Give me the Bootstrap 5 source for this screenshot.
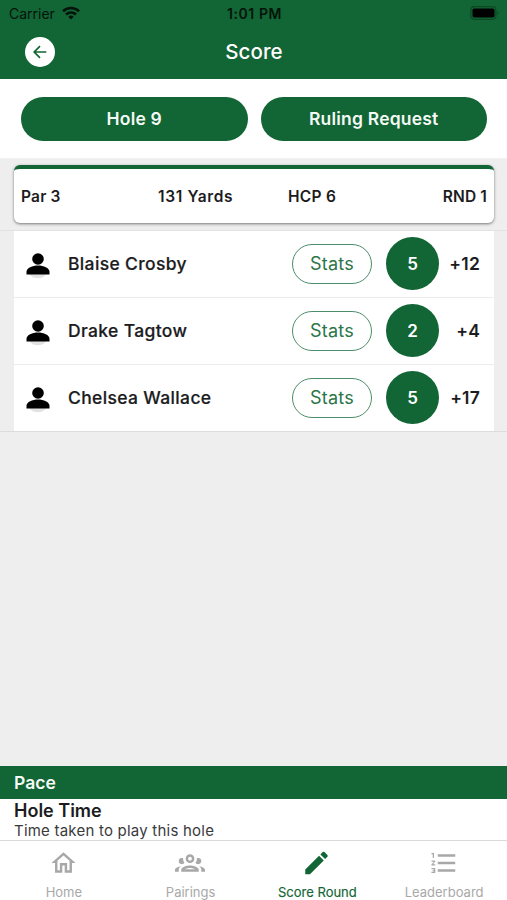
<!DOCTYPE html>
<html lang="en">
<head>
<meta charset="utf-8">
<meta name="viewport" content="width=device-width, initial-scale=1">
<title>Score</title>
<link rel="stylesheet" href="https://cdn.jsdelivr.net/npm/bootstrap@5.3.0/dist/css/bootstrap.min.css">
<style>
:root { --green: #126534; }
body { font-family: Inter, "Liberation Sans", sans-serif; background: #eee; color: #1c1c1e; height: 900px; overflow: hidden; line-height: 1.2; }
svg { display: block; fill: currentColor; }
.bg-green { background: var(--green); }
.text-green { color: var(--green); }
.topbar { height: 79px; }
.status { height: 28px; color: #04140a; font-size: 14px; padding: 0 7px 0 9px; }
.status svg { margin-bottom: 2px; }
.status-side { flex: 1 1 0; }
.clock { font-size: 14px; font-weight: 600; letter-spacing: .6px; }
.wifi { margin-left: 7px; }
.titlebar { height: 48px; padding: 0 25px; }
.back { width: 30px; height: 30px; }
.screen-title { font-size: 20.5px; font-weight: 500; letter-spacing: .1px; padding-right: 29px; }
.actions { height: 80px; padding: 18px 20px 18px 21px; gap: 13px; border-bottom: 1px solid #f2f2f2; }
.action { height: 44px; font-size: 17.5px; font-weight: 600; border: 0; color: #f4faf5; letter-spacing: .2px; }
.action:hover { background: var(--green); color: #fff; }
.hole-wrap { padding: 6px 13px 6px 14px; height: 72px; border-bottom: 1px solid #e2e2e2; }
.hole-card { height: 58px; border: 0; border-top: 4px solid var(--green); border-radius: 6px; box-shadow: 0 1px 3px rgba(0,0,0,.5); padding: 2px 7px 0; font-size: 15.5px; font-weight: 600; letter-spacing: .15px; white-space: nowrap; }
.hole-par { width: 137px; letter-spacing: .2px; }
.hole-yards { width: 130px; letter-spacing: .65px; }
.hole-hcp { letter-spacing: .3px; }
.players-wrap { padding: 0 13px 0 14px; border-bottom: 1px solid #dcdcdc; }
.player { height: 67px; padding: 0 14px 1px 10px; border-bottom: 1px solid #ececec; }
.player:last-child { height: 66px; border: 0; }
.player-icon { margin-top: 6px; color: #000; }
.player-name { font-size: 17.5px; font-weight: 500; margin-left: 16px; letter-spacing: .35px; -webkit-text-stroke: .2px; }
.stats { width: 80px; height: 40px; border: 1px solid #4d8d69; font-size: 18px; color: #2b7549; padding: 0; letter-spacing: .2px; }
.strokes { width: 53px; height: 53px; margin: 0 1px 0 14px; padding-top: 1px; font-size: 17px; font-weight: 600; }
.total { width: 40px; font-size: 17.5px; font-weight: 600; text-align: right; white-space: nowrap; letter-spacing: .2px; }
.pace-head { height: 33px; padding-left: 14px; font-size: 17.5px; font-weight: 600; color: #f4faf5; }
.pace-body { height: 41px; padding: 1px 14px 0; }
.pace-title { font-size: 18px; font-weight: 600; line-height: 21px; }
.pace-sub { font-size: 15px; line-height: 20px; color: #3a3a3c; letter-spacing: .22px; }
.tabs { height: 60px; border-top: 1px solid #dadada; }
.tab { flex: 1 1 0; color: #a8a8a8; font-size: 13px; padding-top: 7px; }
.tab svg { height: 30px; }
.tab span { margin-top: 7px; margin-left: 1px; line-height: 14px; }
.tab.current { color: var(--green); }
.tab.current span { -webkit-text-stroke: .15px; }
</style>
<script src="https://cdn.jsdelivr.net/npm/bootstrap@5.3.0/dist/js/bootstrap.bundle.min.js"></script>
</head>
<body class="d-flex flex-column">
<svg width="0" height="0" class="d-none">
  <symbol id="person" viewBox="0 0 28 32">
    <path d="M5 22.5h17.500c-1.400 3-4.500 4.700-8.750 4.700S6.400 25.500 5 22.500z" fill="#e2e2e2"/>
    <circle cx="14" cy="8" r="5.800"/><path d="M2.500 23.500v-2.700c0-4 6-6.300 11.500-6.300s11.500 2.300 11.500 6.300v2.700z"/>
  </symbol>
</svg>
<header class="topbar bg-green flex-shrink-0">
  <div class="status d-flex align-items-center">
    <div class="status-side d-flex align-items-center"><span>Carrier</span>
      <svg class="wifi" width="18" height="14" viewBox="0 0 18 14"><path d="M1 5.300a11.500 11.500 0 0 1 16 0M4 8.500a7.300 7.300 0 0 1 10 0" fill="none" stroke="currentColor" stroke-width="2.600"/><path d="M9 13.500 6.300 10.800a4 4 0 0 1 5.400 0z"/></svg>
    </div>
    <span class="clock">1:01 PM</span>
    <div class="status-side d-flex justify-content-end">
      <svg width="30" height="14" viewBox="0 0 30 14"><rect x=".9" y=".7" width="25" height="12.600" rx="3.500" fill="none" stroke="#0c4924" stroke-width="1.200"/><rect x="2.500" y="2.500" width="22" height="9" rx="1.800" fill="#000"/><path d="M27.500 4.700q2 2.300 0 4.600z" fill="#0c4924"/></svg>
    </div>
  </div>
  <div class="titlebar d-flex align-items-center">
    <button class="back btn rounded-circle bg-white p-0 d-flex align-items-center justify-content-center text-green" aria-label="Back">
      <svg width="14" height="14" viewBox="0 0 14 14"><path d="M13.300 7H1.500M7 1.200 1.200 7 7 12.800" fill="none" stroke="currentColor" stroke-width="1.700"/></svg>
    </button>
    <h1 class="screen-title text-white text-center flex-grow-1 mb-0">Score</h1>
  </div>
</header>
<div class="actions bg-white d-flex flex-shrink-0">
  <button class="action btn rounded-pill bg-green flex-fill w-50 p-0">Hole 9</button>
  <button class="action btn rounded-pill bg-green flex-fill w-50 p-0">Ruling Request</button>
</div>
<main class="flex-grow-1">
  <div class="hole-wrap">
    <div class="hole-card card flex-row align-items-center">
      <span class="hole-par">Par 3</span><span class="hole-yards">131 Yards</span><span class="hole-hcp">HCP 6</span><span class="ms-auto">RND 1</span>
    </div>
  </div>
  <div class="players-wrap">
    <div class="bg-white">
      <div class="player d-flex align-items-center">
        <svg class="player-icon" width="28" height="32"><use href="#person"/></svg><span class="player-name flex-grow-1">Blaise Crosby</span>
        <button class="stats btn rounded-pill">Stats</button><span class="strokes bg-green text-white rounded-circle d-flex align-items-center justify-content-center">5</span><span class="total">+12</span>
      </div>
      <div class="player d-flex align-items-center">
        <svg class="player-icon" width="28" height="32"><use href="#person"/></svg><span class="player-name flex-grow-1">Drake Tagtow</span>
        <button class="stats btn rounded-pill">Stats</button><span class="strokes bg-green text-white rounded-circle d-flex align-items-center justify-content-center">2</span><span class="total">+4</span>
      </div>
      <div class="player d-flex align-items-center">
        <svg class="player-icon" width="28" height="32"><use href="#person"/></svg><span class="player-name flex-grow-1">Chelsea Wallace</span>
        <button class="stats btn rounded-pill">Stats</button><span class="strokes bg-green text-white rounded-circle d-flex align-items-center justify-content-center">5</span><span class="total">+17</span>
      </div>
    </div>
  </div>
</main>
<section class="flex-shrink-0">
  <div class="pace-head bg-green d-flex align-items-center">Pace</div>
  <div class="pace-body bg-white">
    <div class="pace-title">Hole Time</div>
    <div class="pace-sub">Time taken to play this hole</div>
  </div>
</section>
<nav class="tabs bg-white d-flex flex-shrink-0">
  <div class="tab d-flex flex-column align-items-center">
    <svg width="29" viewBox="0 0 24 24"><path d="M12 5.690l5 4.500V18h-2v-6H9v6H7v-7.810l5-4.500M12 3L2 12h3v8h6v-6h2v6h6v-8h3L12 3z"/></svg><span>Home</span>
  </div>
  <div class="tab d-flex flex-column align-items-center">
    <svg width="30" viewBox="0 0 24 24"><path d="M12,5A3.500,3.500 0 0,0 8.500,8.500A3.500,3.500 0 0,0 12,12A3.500,3.500 0 0,0 15.500,8.500A3.500,3.500 0 0,0 12,5M12,7A1.500,1.500 0 0,1 13.500,8.500A1.500,1.500 0 0,1 12,10A1.500,1.500 0 0,1 10.500,8.500A1.500,1.500 0 0,1 12,7M5.500,8A2.500,2.500 0 0,0 3,10.500C3,11.440 3.530,12.250 4.290,12.680C4.650,12.880 5.060,13 5.500,13C5.940,13 6.350,12.880 6.710,12.680C7.080,12.470 7.390,12.170 7.620,11.810C6.890,10.860 6.500,9.700 6.500,8.500C6.500,8.410 6.500,8.310 6.500,8.220C6.200,8.080 5.860,8 5.500,8M18.500,8C18.140,8 17.800,8.080 17.500,8.220C17.500,8.310 17.500,8.410 17.500,8.500C17.500,9.700 17.110,10.860 16.380,11.810C16.500,12 16.630,12.150 16.780,12.300C16.940,12.450 17.100,12.580 17.290,12.680C17.650,12.880 18.060,13 18.500,13C18.940,13 19.350,12.880 19.710,12.680C20.470,12.250 21,11.440 21,10.500A2.500,2.500 0 0,0 18.500,8M12,14C9.660,14 5,15.170 5,17.500V19H19V17.500C19,15.170 14.340,14 12,14M4.710,14.550C2.780,14.780 0,15.760 0,17.500V19H3V17.070C3,16.060 3.690,15.220 4.710,14.550M19.290,14.550C20.310,15.220 21,16.060 21,17.070V19H24V17.500C24,15.760 21.220,14.780 19.290,14.550M12,16C13.530,16 15.240,16.500 16.230,17H7.770C8.760,16.500 10.470,16 12,16Z"/></svg><span>Pairings</span>
  </div>
  <div class="tab current d-flex flex-column align-items-center">
    <svg width="31" viewBox="0 0 24 24"><path d="M3 17.250V21h3.750L17.810 9.940l-3.750-3.750L3 17.250zM20.710 7.040a1 1 0 0 0 0-1.410l-2.340-2.340a1 1 0 0 0-1.410 0l-1.830 1.830 3.750 3.750 1.830-1.830z"/></svg><span>Score Round</span>
  </div>
  <div class="tab d-flex flex-column align-items-center">
    <svg width="30" viewBox="0 0 24 24"><path d="M7,13V11H21V13H7M7,19V17H21V19H7M7,7V5H21V7H7M3,8V5H2V4H4V8H3M2,17V16H5V20H2V19H4V18.500H3V17.500H4V17H2M4.250,10A0.750,0.750 0 0,1 5,10.750C5,10.950 4.920,11.140 4.790,11.270L3.120,13H5V14H2V13.080L4,11H2V10H4.250Z"/></svg><span>Leaderboard</span>
  </div>
</nav>
</body>
</html>
